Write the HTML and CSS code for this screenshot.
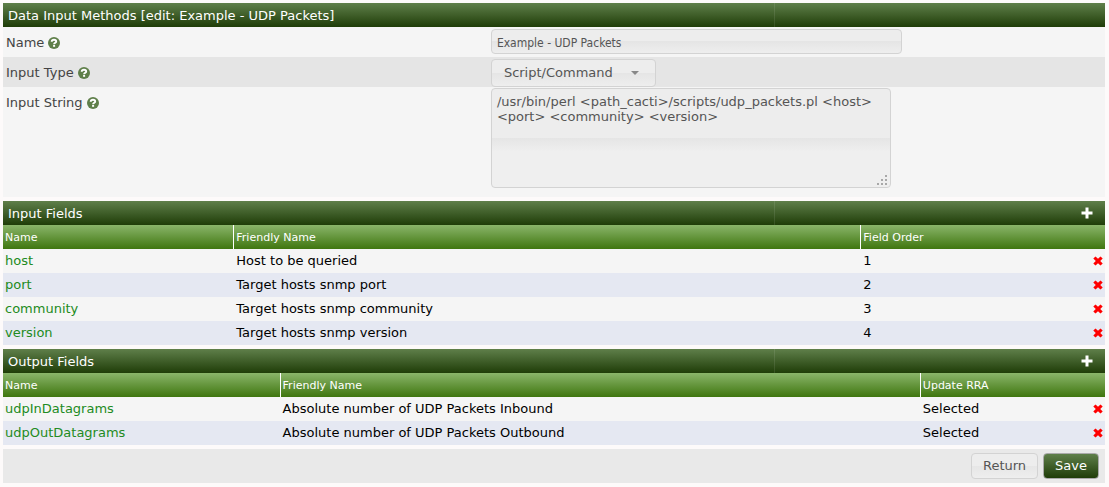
FILE: index.html
```html
<!DOCTYPE html>
<html lang="en">
<head>
<meta charset="utf-8">
<title>Data Input Methods</title>
<link rel="stylesheet" href="styles.css">
</head>
<body>
<svg class="sprite" aria-hidden="true">
  <symbol id="help" viewBox="0 0 12 12">
    <circle cx="6" cy="6" r="6" fill="#5f7f4a"/>
    <path d="M3.700 4.700C3.800 3.300 4.800 2.700 6 2.700c1.300 0 2.200.7 2.200 1.800C8.200 5.900 6.100 5.700 6.100 7.300" fill="none" stroke="#fff" stroke-width="1.900"/>
    <path d="M5.100 8h2v1.800H5.100z" fill="#fff"/>
  </symbol>
  <symbol id="plus" viewBox="0 0 12 12">
    <path d="M4.500.500h3v4h4v3h-4v4h-3v-4h-4v-3h4z" fill="#fff"/>
  </symbol>
  <symbol id="cross" viewBox="0 0 10 10">
    <path d="M2.500.500 5 2.800 7.500.500 9.700 2.600 7.200 5l2.500 2.400-2.200 2.100L5 7.200 2.500 9.500.300 7.400 2.800 5 .300 2.600z" fill="#f00"/>
  </symbol>
</svg>
<form class="page">
  <section class="panel">
    <div class="title"><h2>Data Input Methods [edit: Example - UDP Packets]</h2></div>
    <div class="row">
      <div class="label"><label for="name">Name</label><svg class="help"><use href="#help"/></svg></div>
      <div><input class="field text" id="name" type="text" value="Example - UDP Packets"></div>
    </div>
    <div class="row alt">
      <div class="label"><label for="type">Input Type</label><svg class="help"><use href="#help"/></svg></div>
      <div class="select-box">
        <select class="field select" id="type"><option>Script/Command</option></select>
        <svg class="arrow" viewBox="0 0 8 4"><path d="M0 0h8L4 4z" fill="#888"/></svg>
      </div>
    </div>
    <div class="row tall">
      <div class="label"><label for="string">Input String</label><svg class="help"><use href="#help"/></svg></div>
      <div class="area-box">
        <textarea class="field area" id="string">/usr/bin/perl &lt;path_cacti&gt;/scripts/udp_packets.pl &lt;host&gt; &lt;port&gt; &lt;community&gt; &lt;version&gt;</textarea>
        <svg class="grip" viewBox="0 0 11 11"><path d="M8 0h2v2H8zM4 4h2v2H4zM8 4h2v2H8zM0 8h2v2H0zM4 8h2v2H4zM8 8h2v2H8z" fill="#a8a8a8"/></svg>
      </div>
    </div>
  </section>

  <section class="panel">
    <div class="title"><h2>Input Fields</h2><button class="icon" type="button" aria-label="Add input field"><svg class="plus"><use href="#plus"/></svg></button></div>
    <table class="list inputs">
      <thead><tr><th class="name">Name</th><th class="friendly">Friendly Name</th><th>Field Order</th><th class="action"></th></tr></thead>
      <tbody>
        <tr><td><a href="#">host</a></td><td>Host to be queried</td><td>1</td><td><button class="icon" type="button" aria-label="Delete host"><svg class="cross"><use href="#cross"/></svg></button></td></tr>
        <tr><td><a href="#">port</a></td><td>Target hosts snmp port</td><td>2</td><td><button class="icon" type="button" aria-label="Delete port"><svg class="cross"><use href="#cross"/></svg></button></td></tr>
        <tr><td><a href="#">community</a></td><td>Target hosts snmp community</td><td>3</td><td><button class="icon" type="button" aria-label="Delete community"><svg class="cross"><use href="#cross"/></svg></button></td></tr>
        <tr><td><a href="#">version</a></td><td>Target hosts snmp version</td><td>4</td><td><button class="icon" type="button" aria-label="Delete version"><svg class="cross"><use href="#cross"/></svg></button></td></tr>
      </tbody>
    </table>
  </section>

  <section class="panel">
    <div class="title"><h2>Output Fields</h2><button class="icon" type="button" aria-label="Add output field"><svg class="plus"><use href="#plus"/></svg></button></div>
    <table class="list outputs">
      <thead><tr><th class="name">Name</th><th class="friendly">Friendly Name</th><th>Update RRA</th><th class="action"></th></tr></thead>
      <tbody>
        <tr><td><a href="#">udpInDatagrams</a></td><td>Absolute number of UDP Packets Inbound</td><td>Selected</td><td><button class="icon" type="button" aria-label="Delete udpInDatagrams"><svg class="cross"><use href="#cross"/></svg></button></td></tr>
        <tr><td><a href="#">udpOutDatagrams</a></td><td>Absolute number of UDP Packets Outbound</td><td>Selected</td><td><button class="icon" type="button" aria-label="Delete udpOutDatagrams"><svg class="cross"><use href="#cross"/></svg></button></td></tr>
      </tbody>
    </table>
  </section>

  <div class="actions">
    <button class="btn" type="button">Return</button>
    <button class="btn save" type="submit">Save</button>
  </div>
</form>
</body>
</html>
```

FILE: styles.css
```css
* { box-sizing: border-box; }
body {
  margin: 0;
  background: #fdfafa;
  color: #444;
  font: 13px/16px Verdana, "DejaVu Sans", sans-serif;
}
.sprite { display: none; }
.page { display: flex; flex-direction: column; gap: 4px; padding: 3px 4px 4px 3px; }
.title {
  display: flex;
  align-items: center;
  justify-content: space-between;
  height: 24px;
  padding: 2px 12px 0 5px;
  color: #fff;
  background:
    linear-gradient(#ffffff18, #ffffff18) 70% 0 / 1px 100% no-repeat,
    linear-gradient(#5f7f4a, #1f3d08);
}
.title h2 { margin: 0; font-size: 13px; font-weight: normal; }
.icon { display: flex; padding: 0; border: 0; background: none; cursor: pointer; }
.title .icon { padding-bottom: 2px; }
.plus { width: 12px; height: 12px; }
.cross { width: 10px; height: 10px; }

.row { display: grid; grid-template-columns: 44% 1fr; column-gap: 3px; align-items: start; min-height: 30px; background: #f5f5f5; }
.row.alt { background: #e5e5e5; }
.row.tall { min-height: 110px; }
.label { display: flex; align-items: center; gap: 4px; height: 30px; padding: 2px 0 0 3px; }
.help { width: 12px; height: 12px; }
.field {
  display: block;
  margin: 0;
  border: 1px solid #d3d3d3;
  border-radius: 4px;
  outline: 0;
  color: #555;
  font: inherit;
  background: linear-gradient(#ededed 50%, #e5e5e5 50%, #eee);
}
.text { width: 411px; height: 25px; margin-top: 2px; padding: 4px 5px 2px; font-family: Tahoma, "DejaVu Sans Condensed", "DejaVu Sans", sans-serif; font-size: 12px; font-stretch: normal; }
.select-box { position: relative; width: 165px; }
.select { width: 165px; height: 28px; margin-top: 2px; padding: 0 24px 0 12px; appearance: none; }
.arrow { position: absolute; right: 17px; top: 14px; width: 8px; height: 4px; pointer-events: none; }
.area-box { position: relative; width: 400px; margin-top: 1px; }
.area { width: 400px; height: 100px; padding: 5px; resize: none; line-height: 15px; background: linear-gradient(#ededed 50%, #e5e5e5 50%, #efefef 64%); }
.grip { position: absolute; right: 3px; bottom: 2px; width: 11px; height: 11px; pointer-events: none; }

.list { width: 100%; table-layout: fixed; border-collapse: separate; border-spacing: 0; color: #000; }
.list thead { background: linear-gradient(#8ab56a, #3f760f); }
.list th, .list td { height: 24px; padding: 0 2px; text-align: left; white-space: nowrap; }
.list td + td { padding-left: 3px; }
.list td:last-child { padding-left: 2px; }
.list th { padding-top: 2px; color: #fff; font-size: 11px; font-weight: normal; }
.list th + th:not(.action) { border-left: 1px solid #fff; }
.list tbody tr { background: #f5f5f5; }
.list tbody tr:nth-child(even) { background: #e5e8f2; }
.list a { color: #228b22; text-decoration: none; }
.inputs .name { width: 20.9%; }
.inputs .friendly { width: 56.9%; }
.outputs .name { width: 25.1%; }
.outputs .friendly { width: 58.1%; }
.list .action { width: 14px; }

.actions { display: flex; justify-content: flex-end; gap: 5px; padding: 4px 6px; background: #e9e9e9; }
.btn {
  height: 26px;
  padding: 0 11px;
  border: 1px solid #d3d3d3;
  border-radius: 4px;
  color: #555;
  font: inherit;
  background: linear-gradient(#ededed 50%, #e6e6e6 50%, #eee);
}
.save { border-color: #aaa; color: #fff; background: linear-gradient(#5f7f4a, #1f3d08); }
```
